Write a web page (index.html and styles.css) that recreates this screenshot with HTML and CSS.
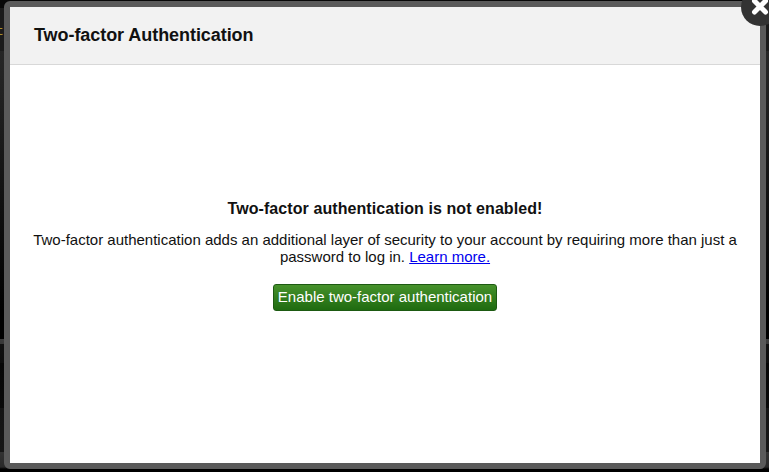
FILE: index.html
```
<!DOCTYPE html>
<html lang="en">
<head>
    <meta charset="UTF-8">
    <title>Two-factor Authentication</title>
    <link rel="stylesheet" href="styles.css">
</head>
<body>
    <span class="page-text page-text-top">t<b>a</b></span>
    <span class="page-text page-text-bottom">,<b>"</b></span>

    <div class="modal">
        <div class="modal-header">
            <h1>Two-factor Authentication</h1>
        </div>
        <div class="modal-content">
            <h2>Two-factor authentication is not enabled!</h2>
            <p>Two-factor authentication adds an additional layer of security to your account by requiring more than just a password to log in. <a href="#">Learn more.</a></p>
            <button class="btn-green" type="button">Enable two-factor authentication</button>
        </div>
        <div class="modal-close">
            <svg width="38" height="38" viewBox="0 0 38 38">
                <circle cx="19" cy="19" r="19" fill="#333"/>
                <path d="M13.5 13 L24.5 24 M24.5 13 L13.5 24" stroke="#fff" stroke-width="5" stroke-linecap="round"/>
            </svg>
        </div>
    </div>
</body>
</html>
```

FILE: styles.css
```
* { box-sizing: border-box; }
body {
    margin: 0;
    padding: 1px 3px 3px 4px;
    height: 472px;
    overflow: hidden;
    position: relative;
    font-family: "Liberation Sans", Arial, sans-serif;
    color: #111;
    background: linear-gradient(#080808 8px, #1b1b1b 8px, #1b1b1b 51px, #262626 51px, #1d1d1d 120px, #000 310px, #000 339px, #3c3c3c 339px, #383838 344px, #111 344px, #0d0d0d 363px, #060606 363px, #090909 408px, #141414 408px, #161616 452px, #333 452px, #292929 467px, #000 469px);
}
.modal {
    position: relative;
    display: flex;
    flex-direction: column;
    height: 468px;
    border: 6px solid #5a5a5a;
    border-radius: 6px;
    background: #fff;
}
.modal-header {
    height: 58px;
    padding: 17px 24px 0;
    background: #f2f2f2;
    border-bottom: 1px solid #d8d8d8;
}
.modal-header h1 { margin: 0; font-size: 18px; line-height: 22px; letter-spacing: -0.06px; }
.modal-content {
    padding: 134px 20px 0;
    text-align: center;
}
.modal-content h2 { margin: 0 0 13px; font-size: 16px; line-height: 19px; letter-spacing: 0.08px; }
.modal-content p { margin: 0 0 19px; font-size: 15px; line-height: 17px; }
.modal-content a { color: #0000ee; }
.btn-green {
    height: 27px;
    padding: 0 4px 2px;
    border: 1px solid #1d5a12;
    border-radius: 3px;
    background: linear-gradient(#46912b, #1f6b10);
    color: #fff;
    font: 15px/23px "Liberation Sans", Arial, sans-serif;
    vertical-align: top;
}
.modal-close { position: absolute; top: -19px; right: -19px; width: 38px; height: 38px; }
.modal-close svg { display: block; }
.page-text { position: absolute; font: 13px/16px "Liberation Mono", monospace; color: #a8912c; }
.page-text b { font-weight: normal; color: #5688a8; }
.page-text-top { left: -4px; top: 24px; }
.page-text-bottom { left: -5px; top: 420px; }
```
